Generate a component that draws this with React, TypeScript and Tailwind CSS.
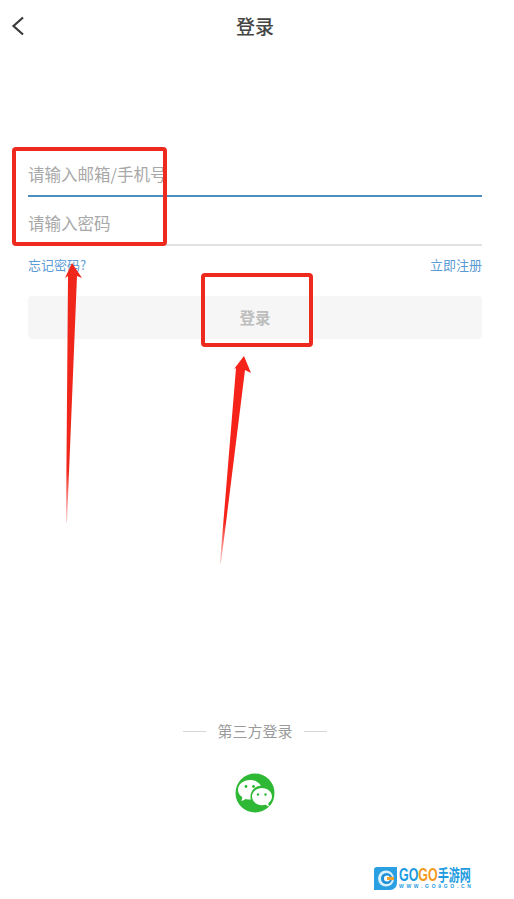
const font = "[font-family:'Noto_Sans_CJK_SC','Liberation_Sans',sans-serif]"

function WechatIcon() {
  return (
    <svg width="40" height="40" viewBox="0 0 40 40">
      <circle cx="20" cy="20" r="19.500" fill="#2fb835" />
      <path d="M15 7C8.400 7 3 11.400 3 16.800c0 3.100 1.700 5.700 4.400 7.500l-1 4 4.300-2.400c1.400.4 2.800.6 4.300.6 6.600 0 12-4.300 12-9.700S21.600 7 15 7z" fill="#fff" />
      <circle cx="27" cy="24" r="11.500" fill="#2fb835" />
      <path d="M27 15c-5.500 0-10 3.800-10 8.600s4.500 8.600 10 8.600c1.200 0 2.400-.2 3.500-.5l3.700 2-1-3.400c2.300-1.600 3.800-4 3.800-6.700 0-4.800-4.500-8.600-10-8.600z" fill="#fff" />
      <circle cx="11" cy="13.500" r="1.400" fill="#2fb835" />
      <circle cx="18.500" cy="13.500" r="1.400" fill="#2fb835" />
      <circle cx="23" cy="21.500" r="1.200" fill="#2fb835" />
      <circle cx="30.500" cy="21.500" r="1.200" fill="#2fb835" />
    </svg>
  )
}

function GogoLogo() {
  return (
    <div className="flex items-start gap-[2px]">
      <svg width="23" height="23" viewBox="0 0 23 23">
        <path d="M3 0h20v16a7 7 0 0 1-7 7H0V3a3 3 0 0 1 3-3z" fill="#2a9fe2" />
        <circle cx="12" cy="11.500" r="8" fill="#d8f0fb" />
        <circle cx="12.500" cy="11.500" r="5.500" fill="#1f8fd6" />
        <circle cx="13" cy="11.500" r="3" fill="#fff" />
        <rect x="13" y="10" width="7" height="3" fill="#f2a02a" />
      </svg>
      <div className="flex flex-col items-start w-[74px] pt-[1px]">
        <div className="flex items-center h-[15px] w-[102px] shrink-0 whitespace-nowrap origin-left scale-x-[0.69] text-[18px] leading-[15px] font-bold [font-family:'Liberation_Sans','Noto_Sans_CJK_SC',sans-serif]">
          <span className="text-[#1e9be0]">GO</span>
          <span className="text-[#f39a1e]">GO</span>
          <span className="text-[#1e9be0] text-[16px]">手游网</span>
        </div>
        <span className="text-[5px] leading-[5px] mt-[1px] font-bold tracking-[2.700px] whitespace-nowrap text-[#1e9be0] [font-family:'Liberation_Sans',sans-serif]">WWW.GO9GO.CN</span>
      </div>
    </div>
  )
}

export default function App() {
  return (
    <div className={`relative w-[514px] h-[899px] overflow-hidden bg-white ${font}`}>
      <div className="w-[510px]">
        {/* header */}
        <div className="relative flex items-center justify-center h-[54px] pb-[2px]">
          <svg className="absolute left-0 top-0" width="30" height="40" viewBox="0 0 30 40" fill="none">
            <path d="M23 17.500 L13.500 26 L23 34.500" stroke="#3a3a3a" strokeWidth="2.200" />
          </svg>
          <h1 className="text-[19px] font-medium text-[#444]">登录</h1>
        </div>

        {/* form */}
        <div className="px-[28px] pt-[93px]">
          <div className="h-[50px] pt-[6px] border-b-2 border-[#4a8fbd] flex items-center">
            <div className="w-[135px] overflow-hidden whitespace-nowrap text-[16.500px] text-[#a8a8a8] leading-[24px]">请输入邮箱/手机号</div>
          </div>
          <div className="h-[49px] pt-[4px] border-b-2 border-[#e2e2e2] flex items-center">
            <div className="text-[16.500px] text-[#a8a8a8] leading-[24px]">请输入密码</div>
          </div>
          <div className="flex justify-between items-center h-[20px] mt-[9px] text-[13px] text-[#5b9bd5]">
            <span>忘记密码?</span>
            <span>立即注册</span>
          </div>
          <div className="h-[43px] mt-[21px] rounded-[4px] bg-[#f6f6f6] flex items-center justify-center text-[15.500px] font-bold text-[#bdbdbd]">
            登录
          </div>
        </div>

        {/* third party */}
        <div className="flex items-center justify-center gap-[11px] mt-[381px] text-[15px] text-[#9a9a9a]">
          <span className="w-[23px] h-px bg-[#d6d6d6]" />
          <span className="leading-[22px]">第三方登录</span>
          <span className="w-[23px] h-px bg-[#d6d6d6]" />
        </div>
        <div className="flex justify-center mt-[31px]">
          <WechatIcon />
        </div>
      </div>
      <div className="flex justify-end pr-[41px] mt-[54px]">
        <GogoLogo />
      </div>

      {/* annotations */}
      <div className="absolute left-[12px] top-[147px] w-[155px] h-[99px] border-[4px] border-[#ee2a1e] rounded-[4px]" />
      <div className="absolute left-[201px] top-[273px] w-[112px] h-[74px] border-[4px] border-[#ee2a1e] rounded-[4px]" />
      <svg className="absolute left-0 top-0 pointer-events-none" width="514" height="899">
        <defs>
          <linearGradient id="fade1" x1="0" y1="263" x2="0" y2="522" gradientUnits="userSpaceOnUse">
            <stop offset="0.800" stopColor="#f0261a" />
            <stop offset="1" stopColor="#f0261a" stopOpacity="0.200" />
          </linearGradient>
          <linearGradient id="fade2" x1="0" y1="356" x2="0" y2="563" gradientUnits="userSpaceOnUse">
            <stop offset="0.800" stopColor="#f5231a" />
            <stop offset="1" stopColor="#f5231a" stopOpacity="0.200" />
          </linearGradient>
        </defs>
        <path d="M72 263 L82 278 L77 276 L67 522 L66 522 L68 276 L65 278 Z" fill="url(#fade1)" />
        <path d="M244 356 L251 373 L245 370 L221 563 L220 563 L236 368 L234 369 Z" fill="url(#fade2)" />
      </svg>
    </div>
  )
}
